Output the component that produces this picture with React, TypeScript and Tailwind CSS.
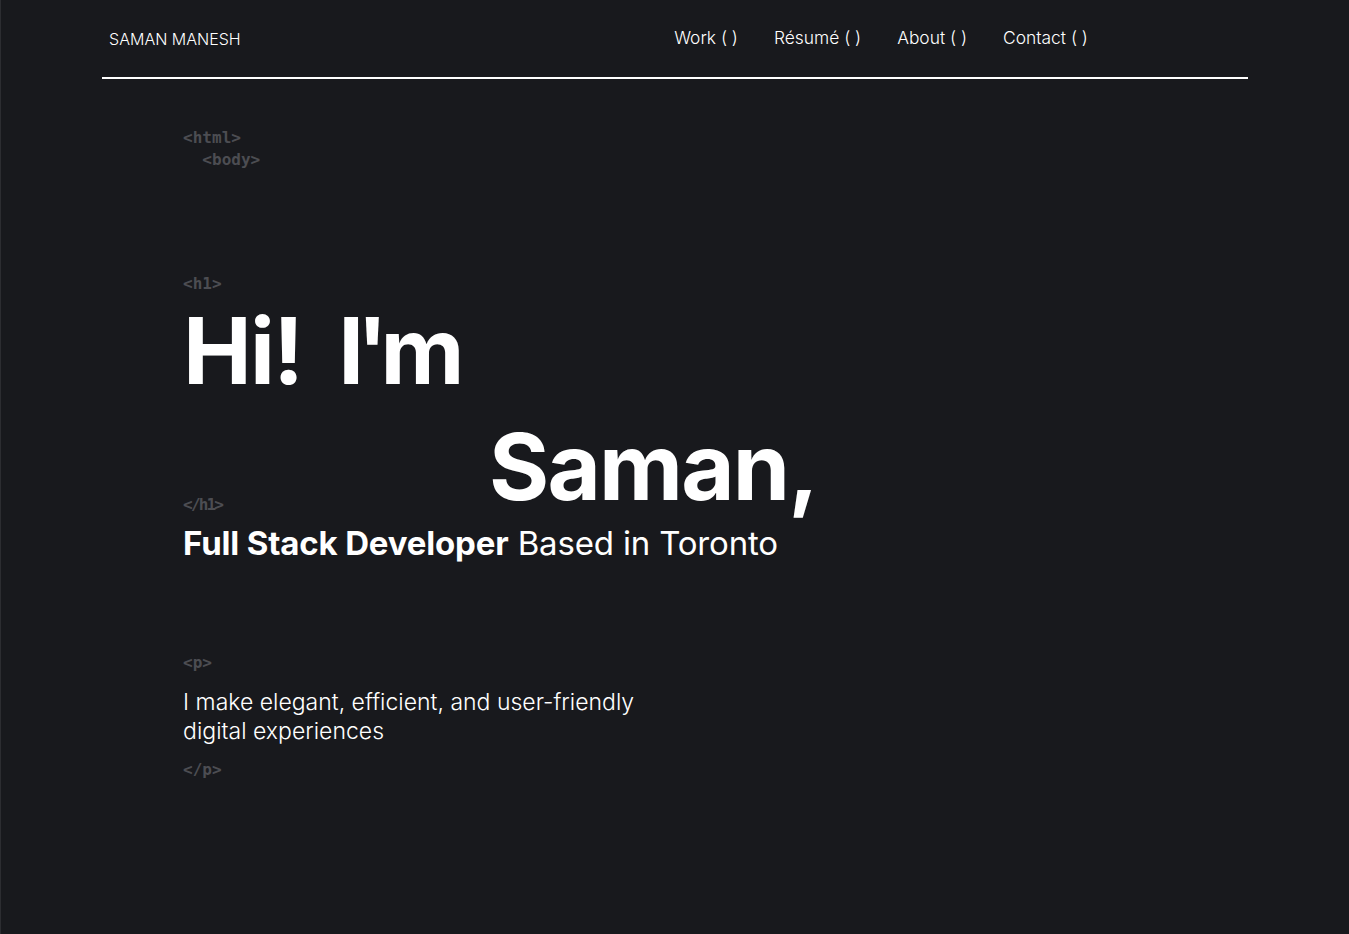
const mono = "font-['DejaVu_Sans_Mono','Liberation_Mono',monospace]";

function Tag({ children, className = "" }: { children: React.ReactNode; className?: string }) {
  return (
    <pre className={`${mono} text-[16px] leading-[22px] font-bold text-[#4c4d52] ${className}`}>
      {children}
    </pre>
  );
}

export default function App() {
  const links = ["Work", "Résumé", "About", "Contact"];
  return (
    <div className="min-h-screen bg-[#18191d] border-l border-[#2c2d31] text-white font-['Inter','Noto_Sans',sans-serif]">
      <header className="w-[85%] mx-auto h-[79px] flex items-center justify-between border-b-2 border-white pl-[7px] pr-[160px]">
        <span className="text-[16px] font-light">SAMAN MANESH</span>
        <nav className="flex gap-[36px]">
          {links.map((l) => (
            <a key={l} href="#" className="text-[17.4px] font-light">
              {l} ( )
            </a>
          ))}
        </nav>
      </header>

      <main className="w-[85%] mx-auto pl-[81px] pt-[48px]">
        <Tag>{"<html>\n  <body>"}</Tag>

        <Tag className="mt-[102px]">{"<h1>"}</Tag>
        <h1 className="font-bold text-[92px] leading-[116px] tracking-[-0.02em] -mt-[2px]">
          <div className="flex">
            <span>Hi!</span>
            <span className="ml-[36px] tracking-[-0.08em]">I'm</span>
          </div>
          <div className="flex items-end">
            <span className="w-[306px] shrink-0 pb-[9px]">
              <Tag>{"</h1>"}</Tag>
            </span>
            <span>Saman,</span>
          </div>
        </h1>
        <p className="text-[33px] leading-[40px] tracking-[-0.005em] -mt-[2px]">
          <span className="font-bold">Full Stack Developer</span> Based in Toronto
        </p>

        <Tag className="mt-[89px]">{"<p>"}</Tag>
        <p className="text-[23px] font-light leading-[29px] mt-[14px]">
          I make elegant, efficient, and user-friendly
          <br />
          digital experiences
        </p>
        <Tag className="mt-[13px]">{"</p>"}</Tag>
      </main>
    </div>
  );
}
